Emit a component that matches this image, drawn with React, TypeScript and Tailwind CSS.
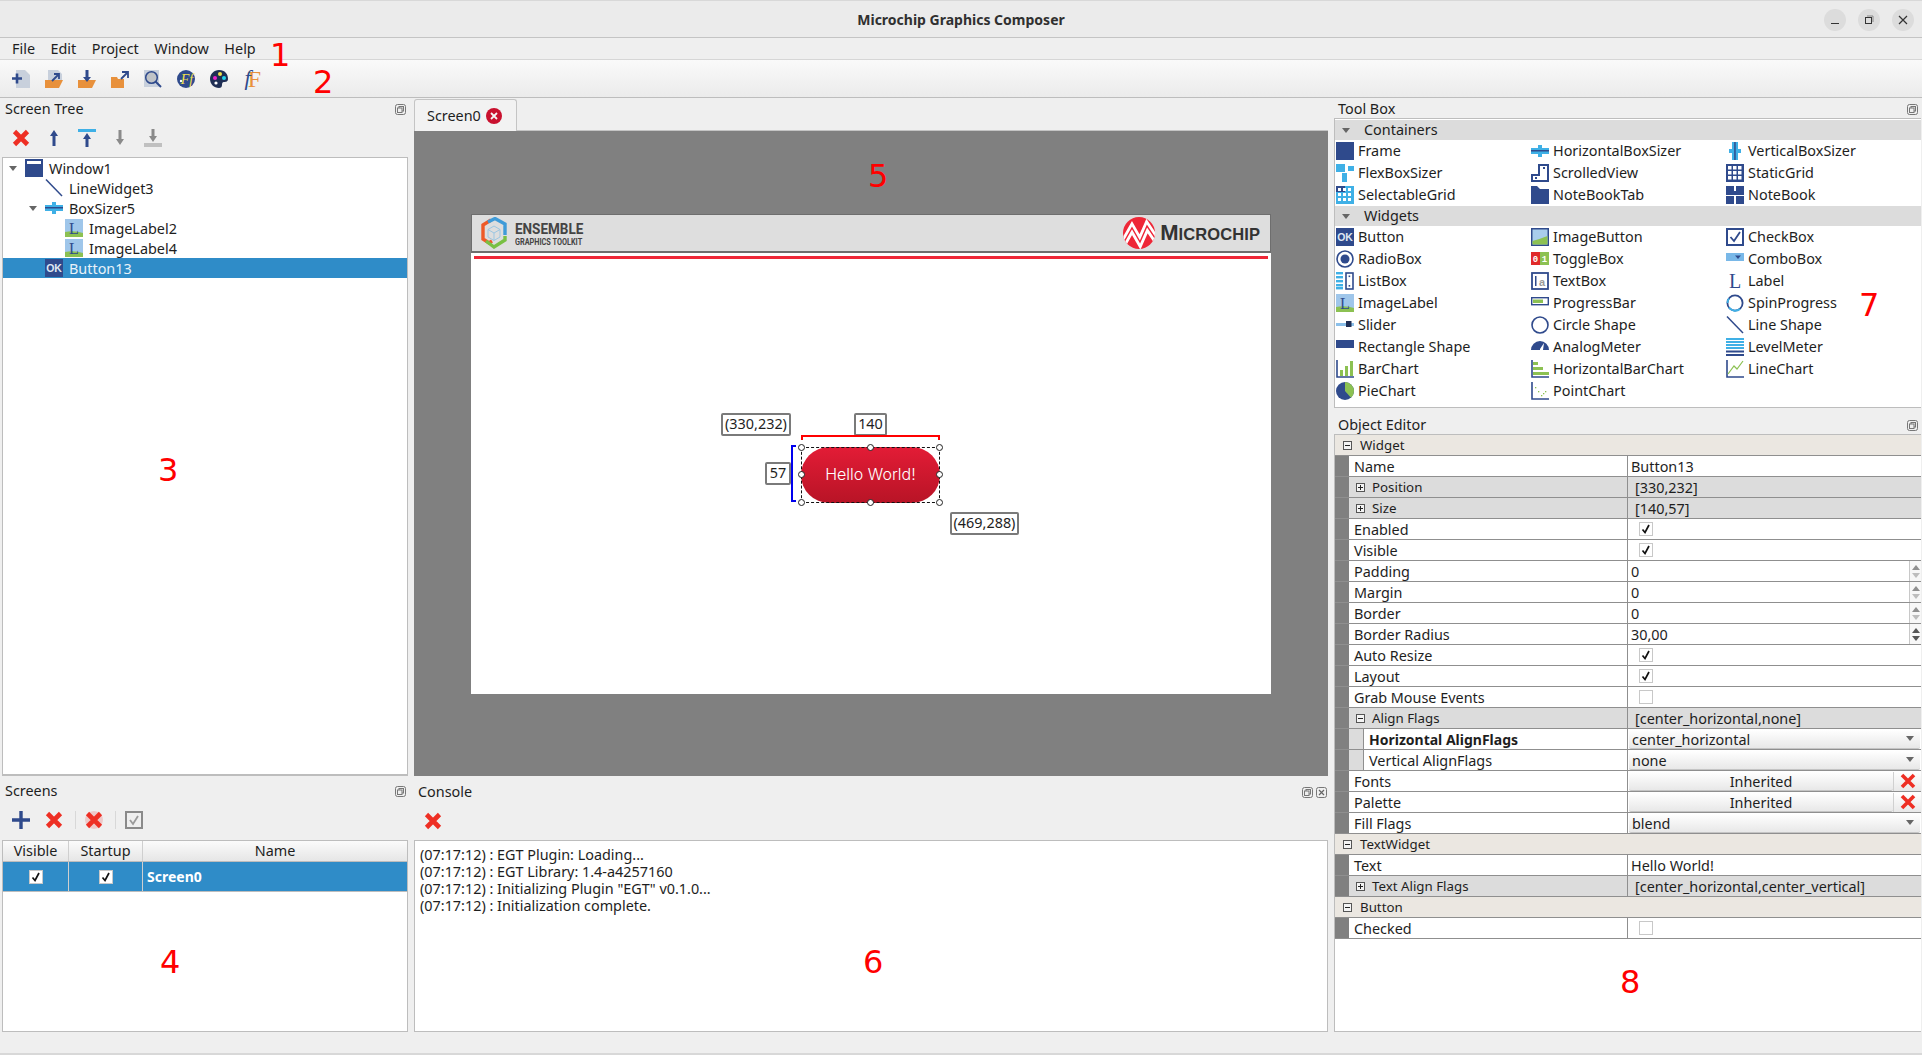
import type { ReactNode } from 'react';

const BLUE = '#2f4a8c';
const SKY = '#3fb0e6';
const RED = '#ee2f24';

const Ico = ({ children }: { children: ReactNode }) => (
  <svg viewBox="0 0 18 18" className="w-[18px] h-[18px] shrink-0 overflow-visible">
    {children}
  </svg>
);

const XIcon = () => (
  <Ico>
    <path d="M2.5 2.5 L15.5 15.5 M15.5 2.5 L2.5 15.5" stroke={RED} strokeWidth="4.6" />
  </Ico>
);

const ArrowUp = ({ color = BLUE }: { color?: string }) => (
  <path d="M9 1 L13 7 H10.5 V17 H7.5 V7 H5 Z" fill={color} />
);

const ArrowDown = ({ color = '#8a8a8a' }: { color?: string }) => (
  <path d="M9 16 L13 10 H10.5 V1 H7.5 V10 H5 Z" fill={color} />
);

const Landscape = () => (
  <>
    <rect width="18" height="18" fill="#9fc6ea" />
    <path d="M0 13 Q9 11 18 14 V18 H0 Z" fill="#8cc152" />
  </>
);

// toolbox + tree icons, drawn by hand on an 18px grid
const icons: Record<string, ReactNode> = {
  frame: <rect width="18" height="18" fill={BLUE} />,
  window: (
    <>
      <rect width="18" height="18" fill={BLUE} />
      <rect x="2" y="2" width="14" height="3" fill="#fff" />
    </>
  ),
  hbox: (
    <>
      <rect x="0" y="6" width="18" height="6" fill={SKY} />
      <rect x="7" y="3" width="4" height="12" fill={SKY} />
      <rect x="0" y="8" width="18" height="1.5" fill={BLUE} />
    </>
  ),
  vbox: (
    <>
      <rect x="6" y="0" width="6" height="18" fill={SKY} />
      <rect x="3" y="7" width="12" height="4" fill={SKY} />
      <rect x="8.2" y="0" width="1.5" height="18" fill={BLUE} />
    </>
  ),
  flex: (
    <>
      <rect x="0" y="0" width="9" height="8" fill={SKY} />
      <rect x="12" y="2" width="6" height="5" fill={SKY} />
      <rect x="6" y="9" width="5" height="9" fill={SKY} />
    </>
  ),
  scrolled: (
    <>
      <path d="M0 18 V10 H7 V0 H18 V18 Z" fill={BLUE} />
      <path d="M9 12 V2 H16 V16 H2 V12 Z" fill="#fff" />
      <rect x="12" y="3" width="2" height="2" fill={BLUE} />
      <rect x="4" y="13" width="2" height="2" fill={BLUE} />
    </>
  ),
  grid: (
    <>
      <rect width="18" height="18" fill={BLUE} />
      {[2, 7, 12].map((x) => [2, 7, 12].map((y) => <rect key={`${x}${y}`} x={x} y={y} width="3.5" height="3.5" fill="#fff" />))}
    </>
  ),
  selgrid: (
    <>
      <rect width="18" height="18" fill={SKY} />
      <rect width="9" height="6" fill={BLUE} />
      {[2, 7, 12].map((x) => [2, 7, 12].map((y) => <rect key={`${x}${y}`} x={x} y={y} width="3" height="3" fill="#fff" />))}
    </>
  ),
  tab: <path d="M0 0 H6 L9 3 H18 V18 H0 Z" fill={BLUE} />,
  notebook: (
    <>
      <rect width="8" height="8" fill={BLUE} />
      <rect x="10" y="0" width="8" height="8" fill={BLUE} />
      <rect y="10" width="8" height="8" fill={BLUE} />
      <rect x="10" y="10" width="8" height="8" fill={BLUE} />
      <rect y="5" width="18" height="4" fill={BLUE} />
    </>
  ),
  ok: (
    <>
      <rect width="18" height="18" fill={BLUE} />
      <text x="9" y="13" textAnchor="middle" fontSize="10.5" fontWeight="700" fill="#dfe8f2" fontFamily="'Liberation Sans', sans-serif">OK</text>
    </>
  ),
  imgbtn: (
    <>
      <rect width="18" height="18" fill={BLUE} />
      <rect x="1.5" y="1.5" width="15" height="15" fill="#a9cdec" />
      <path d="M1.5 13 Q9 11 16.5 8 V16.5 H1.5 Z" fill="#8cc152" />
    </>
  ),
  check: (
    <>
      <rect x="1" y="1" width="16" height="16" fill="#fff" stroke={BLUE} strokeWidth="2" />
      <path d="M4.5 9 L8 13 L14 4" fill="none" stroke={BLUE} strokeWidth="1.8" />
    </>
  ),
  radio: (
    <>
      <circle cx="9" cy="9" r="8" fill="#fff" stroke={BLUE} strokeWidth="1.6" />
      <circle cx="9" cy="9" r="4.5" fill={BLUE} />
    </>
  ),
  toggle: (
    <>
      <rect x="0" y="2" width="9" height="13" fill="#e02a2a" />
      <rect x="9" y="2" width="9" height="13" fill="#8cc152" />
      <text x="4.5" y="12" textAnchor="middle" fontSize="9" fontWeight="700" fill="#fff" fontFamily="'Liberation Mono', monospace">0</text>
      <text x="13.5" y="12" textAnchor="middle" fontSize="9" fontWeight="700" fill="#fff" fontFamily="'Liberation Mono', monospace">1</text>
    </>
  ),
  combo: (
    <>
      <rect x="0" y="3" width="18" height="8" fill="#79b8e8" />
      <path d="M9 5.5 H15 L12 9 Z" fill={BLUE} />
    </>
  ),
  list: (
    <>
      {[0, 4, 8, 12, 15].map((y) => (
        <rect key={y} x="0" y={y} width="7" height="2.4" fill={SKY} />
      ))}
      <rect x="10" y="1" width="7" height="16" fill="#fff" stroke={BLUE} strokeWidth="1.6" />
      <rect x="12.6" y="3.5" width="1.6" height="1.6" fill={BLUE} />
      <rect x="12.6" y="13" width="1.6" height="1.6" fill={BLUE} />
    </>
  ),
  textbox: (
    <>
      <rect x="1" y="1" width="16" height="16" fill="#fff" stroke={BLUE} strokeWidth="1.8" />
      <rect x="4" y="4" width="1.5" height="10" fill={BLUE} />
      <text x="11" y="14" textAnchor="middle" fontSize="11" fontWeight="700" fill="#9a9a9a" fontFamily="'Liberation Sans', sans-serif">a</text>
    </>
  ),
  label: <text x="9" y="16" textAnchor="middle" fontSize="20" fill={BLUE} fontFamily="'Liberation Serif', serif">L</text>,
  imglabel: (
    <>
      <Landscape />
      <text x="9" y="15" textAnchor="middle" fontSize="16" fill={BLUE} fontFamily="'Liberation Serif', serif">L</text>
    </>
  ),
  progress: (
    <>
      <rect x="0.7" y="3.7" width="16.6" height="7" fill="#fff" stroke={BLUE} strokeWidth="1.4" />
      <rect x="2" y="5.5" width="10" height="3.5" fill="#8cc152" />
    </>
  ),
  spin: (
    <>
      <circle cx="9" cy="9" r="7.6" fill="none" stroke={BLUE} strokeWidth="1.8" />
      <path d="M3 13.5 A7.6 7.6 0 0 0 14 15" fill="none" stroke={SKY} strokeWidth="2" />
      <path d="M1.5 9 A7.6 7.6 0 0 1 3 4.5" fill="none" stroke={SKY} strokeWidth="2" />
    </>
  ),
  slider: (
    <>
      <rect x="0" y="7" width="18" height="3" fill="#8bc0ea" />
      <rect x="10" y="5" width="5.5" height="6" fill="#1f2f55" />
    </>
  ),
  circle: <circle cx="9" cy="9" r="8" fill="#fff" stroke={BLUE} strokeWidth="1.6" />,
  line: <path d="M1 0.5 L17 17" stroke={BLUE} strokeWidth="1.5" />,
  rect: <rect x="0" y="2" width="18" height="8" fill={BLUE} />,
  meter: <path d="M0 12 A9 9 0 0 1 18 12 H12 L13 5 L9 11 L9 12 Z" fill={BLUE} />,
  level: (
    <>
      {[0, 3, 6, 9].map((y) => (
        <rect key={y} x="0" y={y} width="18" height="2" fill={SKY} />
      ))}
      <rect x="0" y="12.5" width="18" height="2" fill={BLUE} />
      <rect x="0" y="16" width="18" height="2" fill={BLUE} />
    </>
  ),
  bar: (
    <>
      <path d="M1 0 V17 H18" fill="none" stroke={BLUE} strokeWidth="1.6" />
      <rect x="4" y="10" width="3" height="6" fill="#8cc152" />
      <rect x="9" y="6" width="3" height="10" fill="#8cc152" />
      <rect x="14" y="1" width="3" height="15" fill="#8cc152" />
    </>
  ),
  hbar: (
    <>
      <path d="M1 0 V17 H18" fill="none" stroke={BLUE} strokeWidth="1.6" />
      <rect x="2" y="2" width="5" height="3" fill="#8cc152" />
      <rect x="2" y="7" width="10" height="3" fill="#8cc152" />
      <rect x="2" y="12" width="16" height="3" fill="#8cc152" />
    </>
  ),
  linechart: (
    <>
      <path d="M1 0 V17 H18" fill="none" stroke={BLUE} strokeWidth="1.6" />
      <path d="M2 14 L8 6 L11 9 L17 1" fill="none" stroke="#8cc152" strokeWidth="1.2" />
    </>
  ),
  pie: (
    <>
      <circle cx="9" cy="9" r="9" fill={BLUE} />
      <path d="M9 9 V0 A9 9 0 0 0 0 9 A9 9 0 0 0 3 15.7 Z" fill="#8cc152" transform="scale(-1 1) translate(-18 0)" />
    </>
  ),
  point: (
    <>
      <path d="M1 0 V17 H18" fill="none" stroke={BLUE} strokeWidth="1.6" />
      <rect x="4" y="5" width="1.3" height="1.3" fill="#8cc152" />
      <rect x="7" y="9" width="1.3" height="1.3" fill="#8cc152" />
      <rect x="12" y="11" width="1.3" height="1.3" fill="#8cc152" />
      <rect x="14" y="9" width="1.3" height="1.3" fill="#8cc152" />
      <rect x="10" y="13" width="1.3" height="1.3" fill="#8cc152" />
    </>
  ),
};

const containers = [
  ['frame', 'Frame'], ['hbox', 'HorizontalBoxSizer'], ['vbox', 'VerticalBoxSizer'],
  ['flex', 'FlexBoxSizer'], ['scrolled', 'ScrolledView'], ['grid', 'StaticGrid'],
  ['selgrid', 'SelectableGrid'], ['tab', 'NoteBookTab'], ['notebook', 'NoteBook'],
];

const widgets = [
  ['ok', 'Button'], ['imgbtn', 'ImageButton'], ['check', 'CheckBox'],
  ['radio', 'RadioBox'], ['toggle', 'ToggleBox'], ['combo', 'ComboBox'],
  ['list', 'ListBox'], ['textbox', 'TextBox'], ['label', 'Label'],
  ['imglabel', 'ImageLabel'], ['progress', 'ProgressBar'], ['spin', 'SpinProgress'],
  ['slider', 'Slider'], ['circle', 'Circle Shape'], ['line', 'Line Shape'],
  ['rect', 'Rectangle Shape'], ['meter', 'AnalogMeter'], ['level', 'LevelMeter'],
  ['bar', 'BarChart'], ['hbar', 'HorizontalBarChart'], ['linechart', 'LineChart'],
  ['pie', 'PieChart'], ['point', 'PointChart'],
];

const treeRows = [
  { icon: 'window', label: 'Window1', depth: 0, arrow: true },
  { icon: 'line', label: 'LineWidget3', depth: 1 },
  { icon: 'hbox', label: 'BoxSizer5', depth: 1, arrow: true },
  { icon: 'imglabel', label: 'ImageLabel2', depth: 2 },
  { icon: 'imglabel', label: 'ImageLabel4', depth: 2 },
  { icon: 'ok', label: 'Button13', depth: 1, selected: true },
];

const consoleLines = [
  '(07:17:12) : EGT Plugin: Loading...',
  '(07:17:12) : EGT Library: 1.4-a4257160',
  '(07:17:12) : Initializing Plugin "EGT" v0.1.0...',
  '(07:17:12) : Initialization complete.',
];

const Caret = ({ className = '' }: { className?: string }) => (
  <svg viewBox="0 0 8 5" className={`w-[8px] h-[5px] shrink-0 ${className}`}>
    <path d="M0 0 H8 L4 5 Z" fill="#666" />
  </svg>
);

const FloatIcon = () => (
  <svg viewBox="0 0 11 11" className="w-[11px] h-[11px] shrink-0">
    <rect x="0.5" y="0.5" width="10" height="10" rx="2" fill="none" stroke="#777" />
    <rect x="4" y="2.5" width="4.5" height="4.5" fill="none" stroke="#777" />
    <rect x="2.5" y="4" width="4.5" height="4.5" fill="#efefef" stroke="#777" />
  </svg>
);

const CloseIcon = () => (
  <svg viewBox="0 0 11 11" className="w-[11px] h-[11px] shrink-0">
    <rect x="0.5" y="0.5" width="10" height="10" rx="2" fill="none" stroke="#777" />
    <path d="M3 3 L8 8 M8 3 L3 8" stroke="#666" strokeWidth="1.2" />
  </svg>
);

const PanelTitle = ({ title, className = '', children }: { title: string; className?: string; children?: ReactNode }) => (
  <div className={`flex items-center justify-between shrink-0 ${className}`}>
    <span>{title}</span>
    <div className="flex gap-[3px]">{children ?? <FloatIcon />}</div>
  </div>
);

const CheckBox = ({ checked, className = '' }: { checked?: boolean; className?: string }) => (
  <span className={`flex w-[14px] h-[14px] items-center justify-center border border-[#c8c8c8] bg-white ${className}`}>
    {checked && (
      <svg viewBox="0 0 10 10" className="w-[10px] h-[10px]">
        <path d="M1.5 5.5 L4 8.5 L8 1" fill="none" stroke="#111" strokeWidth="1.7" />
      </svg>
    )}
  </span>
);

const Expander = ({ open }: { open?: boolean }) => (
  <svg viewBox="0 0 9 9" className="w-[9px] h-[9px] shrink-0">
    <rect x="0.5" y="0.5" width="8" height="8" fill="#f4f4f4" stroke="#555" />
    <path d={open ? 'M2 4.5 H7' : 'M2 4.5 H7 M4.5 2 V7'} stroke="#222" />
  </svg>
);

const Spinner = ({ dark }: { dark?: boolean }) => (
  <div className="flex flex-col items-center justify-center gap-[3px] w-[12px] h-full border-l border-[#c8c8c8] bg-[#f7f7f7]">
    <svg viewBox="0 0 8 5" className="w-[8px] h-[5px]"><path d="M0 5 H8 L4 0 Z" fill={dark ? '#555' : '#8f8f8f'} /></svg>
    <svg viewBox="0 0 8 5" className="w-[8px] h-[5px]"><path d="M0 0 H8 L4 5 Z" fill={dark ? '#555' : '#bdbdbd'} /></svg>
  </div>
);

// property row shells
const Section = ({ label }: { label: string }) => (
  <div className="flex items-center h-[21px] pl-[8px] gap-[8px] bg-[#ebe7e1] border-b border-[#8f8f8f] text-[13.3px]">
    <Expander open />
    <span className="pt-[2px]">{label}</span>
  </div>
);

const Row = ({ label, children, bold, sub }: { label: string; children?: ReactNode; bold?: boolean; sub?: boolean }) => (
  <div className="flex h-[21px] border-b border-[#8f8f8f]">
    <div className="w-[14px] bg-[#808080] shrink-0" />
    {sub && <div className="w-[14px] bg-[#dcdcdc] shrink-0" />}
    <div className={`flex items-center pt-[2px] ${sub ? 'w-[265px] pl-[5px] border-l border-[#8f8f8f]' : 'w-[279px] pl-[5px]'} shrink-0 border-r border-[#8f8f8f] ${bold ? 'font-bold text-[14px]' : ''}`}>
      {label}
    </div>
    <div className="flex flex-1 min-w-0 items-center">{children}</div>
  </div>
);

const Value = ({ children }: { children: ReactNode }) => <span className="pl-[3px] pt-[2px]">{children}</span>;

const Group = ({ label, value, open }: { label: string; value: string; open?: boolean }) => (
  <div className="flex h-[21px] bg-[#dcdcdc] border-b border-[#8f8f8f]">
    <div className="w-[14px] bg-[#808080] shrink-0" />
    <div className="flex items-center w-[279px] pl-[7px] gap-[7px] shrink-0 border-r border-[#8f8f8f] text-[13.3px]">
      <Expander open={open} />
      <span className="pt-[2px]">{label}</span>
    </div>
    <span className="flex items-center pl-[7px] pt-[2px]">{value}</span>
  </div>
);

const ToolGrid = ({ items }: { items: string[][] }) => (
  <div className="grid grid-cols-[195px_195px_195px] pl-[1px]">
    {items.map(([icon, label]) => (
      <div key={label} className="flex items-center h-[22px] gap-[4px]">
        <Ico>{icons[icon]}</Ico>
        <span>{label}</span>
      </div>
    ))}
  </div>
);

const ToolHeader = ({ label }: { label: string }) => (
  <div className="flex items-center h-[20px] pl-[7px] gap-[14px] bg-[#dcdcdc]">
    <Caret />
    <span>{label}</span>
  </div>
);

const Annot = ({ n, className }: { n: string; className: string }) => (
  <span className={`absolute text-[32px] leading-none text-[#ff0000] font-['DejaVu_Sans',sans-serif] ${className}`}>{n}</span>
);

const Tag = ({ children, className }: { children: ReactNode; className: string }) => (
  <div className={`absolute flex items-center justify-center h-[23px] border-2 border-[#7a7a7a] rounded-[2px] bg-white text-[14.4px] ${className}`}>
    {children}
  </div>
);

const Handle = ({ className }: { className: string }) => (
  <span className={`absolute w-[7px] h-[7px] rounded-full border-[1.5px] border-[#222] bg-white ${className}`} />
);

export default function App() {
  return (
    <div className="relative flex flex-col w-[1922px] h-[1055px] overflow-hidden bg-[#efefef] text-[14.4px] leading-none text-[#1e1e1e] font-['Noto_Sans',sans-serif]">
      {/* Title bar */}
      <header className="relative flex items-center justify-center h-[38px] shrink-0 bg-[#ebebeb] border-t border-[#d8d8d8] border-b border-b-[#c4c4c4]">
        <span className="pt-[2px] font-bold text-[14px] text-[#303030]">Microchip Graphics Composer</span>
        <div className="absolute right-[8px] top-[8px] flex gap-[12px]">
          {['min', 'max', 'close'].map((b) => (
            <span key={b} className="flex items-center justify-center w-[22px] h-[22px] rounded-full bg-[#dcdcdc]">
              <svg viewBox="0 0 12 12" className="w-[12px] h-[12px]">
                {b === 'min' && <path d="M2 9.5 H10" stroke="#333" strokeWidth="1" />}
                {b === 'max' && (
                  <>
                    <path d="M4 2 H10 V8" fill="none" stroke="#888" />
                    <rect x="2.5" y="3.5" width="6" height="6" fill="none" stroke="#333" />
                  </>
                )}
                {b === 'close' && <path d="M2 2 L10 10 M10 2 L2 10" stroke="#333" strokeWidth="1.2" />}
              </svg>
            </span>
          ))}
        </div>
      </header>

      {/* Menu bar */}
      <nav className="flex items-center h-[22px] shrink-0 pl-[12px] pt-[2px] gap-[15.5px] bg-[#efefef] border-b border-[#d6d6d6]">
        {['File', 'Edit', 'Project', 'Window', 'Help'].map((m) => (
          <span key={m}>{m}</span>
        ))}
      </nav>

      {/* Main toolbar */}
      <div className="flex items-center h-[38px] shrink-0 pl-[12px] gap-[15px] bg-gradient-to-b from-[#fafafa] to-[#ebebeb] border-b border-[#bdbdbd]">
        <Ico>
          <path d="M4 0 H13 L18 5 V18 H4 Z" fill="#c8d0dc" />
          <path d="M0 8.5 H10 M5 3.5 V13.5" stroke={BLUE} strokeWidth="2.6" />
        </Ico>
        <Ico>
          <path d="M3 0 H13 L17 4 V12 H3 Z" fill="#c8d0dc" />
          <path d="M0 10 H18 L14 18 H0 Z" fill="#e8913c" />
          <path d="M7 11 L13 5 M9 4 H14 V9" fill="none" stroke={BLUE} strokeWidth="1.8" />
        </Ico>
        <Ico>
          <path d="M0 10 H18 L14 18 H0 Z" fill="#e8913c" />
          <path d="M9 12 L13 7 H10.5 V0 H7.5 V7 H5 Z" fill={BLUE} />
        </Ico>
        <Ico>
          <path d="M0 7 H6 L7 9 H13 V18 H0 Z" fill="#e8913c" />
          <path d="M10 9 L16 3 M11 2 H17 V8" fill="none" stroke={BLUE} strokeWidth="1.8" />
        </Ico>
        <Ico>
          <rect width="15" height="17" fill="#c8d0dc" />
          <circle cx="7.5" cy="7.5" r="5.8" fill="#bfc3c7" stroke={BLUE} strokeWidth="1.5" />
          <path d="M11.5 11.5 L17 17" stroke={BLUE} strokeWidth="2" />
        </Ico>
        <Ico>
          <circle cx="9" cy="9" r="9" fill={BLUE} />
          <text x="10" y="14" textAnchor="middle" fontSize="14" fontStyle="italic" fill="#f2e14c" fontFamily="'Liberation Serif', serif">Ff</text>
          <circle cx="4" cy="11" r="1.2" fill="#fff" />
        </Ico>
        <Ico>
          <path d="M9 0 C15 0 18 4 18 9 C18 12 15 12 14 12 C12 12 12 14 12 15 C12 17 11 18 9 18 C4 18 0 14 0 9 C0 4 4 0 9 0 Z" fill="#1f2f55" />
          <circle cx="5" cy="8" r="2" fill="#ee22cc" />
          <circle cx="10" cy="4" r="2" fill="#f2e14c" />
          <circle cx="14" cy="8" r="2" fill="#22d4ee" />
          <circle cx="6" cy="13" r="1.6" fill="#fff" />
        </Ico>
        <Ico>
          <text x="11.5" y="16.5" textAnchor="middle" fontSize="24" fill="#e8913c" fontFamily="'Liberation Serif', serif">F</text>
          <text x="4.5" y="15" textAnchor="middle" fontSize="22" fontStyle="italic" fill={BLUE} fontFamily="'Liberation Serif', serif">f</text>
        </Ico>
      </div>

      {/* Docks */}
      <div className="flex flex-1 min-h-0">
        {/* Left column */}
        <div className="flex flex-col w-[406px] ml-[2px] shrink-0">
          <PanelTitle title="Screen Tree" className="h-[22px] pl-[3px] pr-[2px]" />
          <div className="flex items-center h-[37px] pb-[2px] shrink-0 pl-[10px] gap-[15px]">
            <XIcon />
            <Ico><ArrowUp /></Ico>
            <Ico>
              <rect width="18" height="3" fill={SKY} />
              <path d="M9 4 L13 10 H10.5 V18 H7.5 V10 H5 Z" fill={BLUE} />
            </Ico>
            <Ico><ArrowDown /></Ico>
            <Ico>
              <path d="M9 13 L13 7 H10.5 V0 H7.5 V7 H5 Z" fill="#8a8a8a" />
              <rect y="14" width="18" height="4" fill="#c0c0c0" />
            </Ico>
          </div>
          <div className="h-[619px] shrink-0 bg-white border border-[#bdbdbd] border-b-2">
            {treeRows.map((r) => (
              <div
                key={r.label}
                className={`flex items-center h-[20px] gap-[6px] ${r.selected ? 'bg-[#2f8cc8] text-[#e8f2f9]' : ''} ${r.depth === 0 ? 'pl-[22px]' : r.depth === 1 ? 'pl-[42px]' : 'pl-[62px]'} relative`}
              >
                {r.arrow && <Caret className={`absolute ${r.depth === 0 ? 'left-[6px]' : 'left-[26px]'}`} />}
                <Ico>{icons[r.icon]}</Ico>
                <span className="pt-[2px]">{r.label}</span>
              </div>
            ))}
          </div>

          <PanelTitle title="Screens" className="h-[29px] pt-[2px] pl-[3px] pr-[2px]" />
          <div className="flex items-center h-[35px] pb-[5px] shrink-0 pl-[10px]">
            <Ico><path d="M0 9 H18 M9 0 V18" stroke={BLUE} strokeWidth="3.4" /></Ico>
            <span className="ml-[15px]"><XIcon /></span>
            <span className="w-px h-[18px] ml-[12px] bg-[#d8d8d8]" />
            <span className="ml-[9px]">
              <Ico>
                <circle cx="9" cy="9" r="9" fill="#eec9c9" />
                <path d="M2.5 2.5 L15.5 15.5 M15.5 2.5 L2.5 15.5" stroke={RED} strokeWidth="4.6" />
              </Ico>
            </span>
            <span className="w-px h-[18px] ml-[12px] bg-[#d8d8d8]" />
            <span className="ml-[9px]">
              <Ico>
                <rect x="1" y="1" width="16" height="16" fill="none" stroke="#8a8a8a" strokeWidth="2" />
                <path d="M5 9 L8 13 L13 5" fill="none" stroke="#9a9a9a" strokeWidth="1.8" />
              </Ico>
            </span>
          </div>
          <div className="flex flex-col flex-1 min-h-0 bg-white border border-[#bdbdbd]">
            <div className="flex h-[21px] shrink-0 bg-gradient-to-b from-[#fbfbfb] to-[#e6e6e6] border-b border-[#bdbdbd]">
              <div className="flex items-center justify-center w-[66px] border-r border-[#cfcfcf]">Visible</div>
              <div className="flex items-center justify-center w-[74px] border-r border-[#cfcfcf]">Startup</div>
              <div className="flex flex-1 items-center justify-center">Name</div>
            </div>
            <div className="flex h-[30px] shrink-0 bg-[#2f8cc8] text-white border-b border-[#bdbdbd]">
              <div className="flex items-center justify-center w-[66px] border-r border-[#cfcfcf]"><CheckBox checked /></div>
              <div className="flex items-center justify-center w-[74px] border-r border-[#cfcfcf]"><CheckBox checked /></div>
              <div className="flex flex-1 items-center pl-[4px] font-bold text-[14px]">Screen0</div>
            </div>
          </div>
        </div>

        {/* Center column */}
        <div className="flex flex-col w-[914px] ml-[6px] shrink-0">
          <div className="flex h-[33px] shrink-0 items-end border-b border-[#c4c4c4]">
            <div className="flex items-center h-[32px] w-[103px] -mb-px pl-[12px] gap-[5px] bg-[#f2f2f2] border border-[#c4c4c4] border-b-0 rounded-t-[3px]">
              <span className="pt-[2px]">Screen0</span>
              <span className="flex items-center justify-center w-[16px] h-[16px] rounded-full bg-[#c9102e]">
                <svg viewBox="0 0 8 8" className="w-[8px] h-[8px]"><path d="M1 1 L7 7 M7 1 L1 7" stroke="#f5f5f5" strokeWidth="1.8" /></svg>
              </span>
            </div>
          </div>

          {/* Canvas */}
          <div className="relative h-[645px] shrink-0 flex justify-center pt-[83px] bg-[#808080]">
            <div className="relative flex flex-col w-[800px] h-[480px] bg-white">
              <div className="flex items-center justify-between h-[39px] shrink-0 pl-[9px] pr-[10px] bg-[#dedede] border border-[#6e6e6e] border-b-2">
                <div className="flex items-center gap-[8px]">
                  <svg viewBox="0 0 26 32" className="w-[26px] h-[32px] shrink-0">
                    <path d="M10 3 L2 8 V22 L8 26 L11 24" fill="none" stroke="#ee5a28" strokeWidth="3.4" />
                    <path d="M7 5 L14 1.5 L24 7 V18" fill="none" stroke="#3f9bd8" strokeWidth="3.4" />
                    <path d="M5 24 L13 30 L24 23 V19" fill="none" stroke="#79c043" strokeWidth="3.4" />
                    <path d="M13 9 L19 12.5 V20 L13 23.5 L7 20 V12.5 Z M13 16 V23.5 M13 16 L7 12.5 M13 16 L19 12.5" fill="none" stroke="#9cc7e2" strokeWidth="1" />
                  </svg>
                  <div className="flex flex-col gap-[2px] w-[70px] pt-[3px] text-[#444] font-['Roboto',sans-serif] font-bold whitespace-nowrap">
                    <span className="inline-block origin-left scale-x-[0.9] text-[15px] leading-[13px]">ENSEMBLE</span>
                    <span className="inline-block origin-left scale-x-[0.86] text-[8.5px] leading-[9px]">GRAPHICS TOOLKIT</span>
                  </div>
                </div>
                <div className="flex items-center gap-[5px]">
                  <svg viewBox="0 0 32 32" className="w-[32px] h-[32px] shrink-0">
                    <circle cx="16" cy="16" r="16" fill="#ee2737" />
                    <clipPath id="chipClip"><circle cx="16" cy="16" r="16" /></clipPath>
                    <g clipPath="url(#chipClip)" fill="none">
                      <path d="M0 27 L9 11 L17 25 L24 9 L34 24" stroke="#fff" strokeWidth="7" />
                      <path d="M0 27 L9 11 L17 25 L24 9 L34 24" stroke="#ee2737" strokeWidth="1.4" />
                    </g>
                  </svg>
                  <span className="font-['Liberation_Sans',sans-serif] font-bold text-[#333] text-[22px] leading-none">
                    M<span className="text-[16.5px] tracking-[0.1px]">ICROCHIP</span>
                  </span>
                </div>
              </div>
              <div className="h-[3px] mx-[3px] mt-[3px] bg-[#ee2737]" />

              {/* Selected button + handles on the free canvas */}
              <Tag className="left-[250px] top-[199px] w-[70px]">(330,232)</Tag>
              <Tag className="left-[383px] top-[199px] w-[33px]">140</Tag>
              <Tag className="left-[294px] top-[248px] w-[26px]">57</Tag>
              <Tag className="left-[479px] top-[298px] w-[69px]">(469,288)</Tag>
              <div className="absolute left-[330px] top-[221px] w-[139px] h-[5px] border-2 border-b-0 border-[#ff0000]" />
              <div className="absolute left-[320px] top-[231px] w-[5px] h-[57px] border-2 border-r-0 border-[#0000ee]" />
              <div className="absolute left-[330px] top-[233px] flex items-center justify-center pb-[3px] w-[139px] h-[56px] rounded-[30px] bg-gradient-to-b from-[#e31c36] to-[#b81426] text-white text-[16px] font-['Inter',sans-serif] font-light">
                Hello World!
              </div>
              <div className="absolute left-[330px] top-[233px] w-[139px] h-[56px] border border-dashed border-[#111]" />
              <Handle className="left-[327px] top-[230px]" />
              <Handle className="left-[396px] top-[230px]" />
              <Handle className="left-[465px] top-[230px]" />
              <Handle className="left-[327px] top-[257px]" />
              <Handle className="left-[465px] top-[257px]" />
              <Handle className="left-[327px] top-[285px]" />
              <Handle className="left-[396px] top-[285px]" />
              <Handle className="left-[465px] top-[285px]" />
            </div>
          </div>

          <PanelTitle title="Console" className="h-[32px] pl-[4px] pr-[1px]">
            <FloatIcon />
            <CloseIcon />
          </PanelTitle>
          <div className="flex items-center h-[32px] pb-[6px] shrink-0 pl-[10px]"><XIcon /></div>
          <div className="flex-1 min-h-0 pt-[5px] pl-[5px] bg-white border border-[#bdbdbd] text-[14.4px] leading-[17px]">
            {consoleLines.map((l) => (
              <div key={l}>{l}</div>
            ))}
          </div>
        </div>

        {/* Right column */}
        <div className="flex flex-col flex-1 min-w-0 ml-[6px] mr-px">
          <PanelTitle title="Tool Box" className="h-[20px] pt-[2px] pl-[4px] pr-[3px]" />
          <div className="h-[290px] shrink-0 pt-px bg-white border border-r-0 border-[#bdbdbd]">
            <ToolHeader label="Containers" />
            <ToolGrid items={containers} />
            <ToolHeader label="Widgets" />
            <ToolGrid items={widgets} />
          </div>

          <PanelTitle title="Object Editor" className="h-[26px] pt-[8px] pl-[4px] pr-[3px]" />
          <div className="flex-1 min-h-0 bg-white border border-r-0 border-[#bdbdbd]">
            <Section label="Widget" />
            <Row label="Name"><Value>Button13</Value></Row>
            <Group label="Position" value="[330,232]" />
            <Group label="Size" value="[140,57]" />
            <Row label="Enabled"><CheckBox checked className="ml-[11px]" /></Row>
            <Row label="Visible"><CheckBox checked className="ml-[11px]" /></Row>
            <Row label="Padding"><Value>0</Value><span className="flex-1" /><Spinner /></Row>
            <Row label="Margin"><Value>0</Value><span className="flex-1" /><Spinner /></Row>
            <Row label="Border"><Value>0</Value><span className="flex-1" /><Spinner /></Row>
            <Row label="Border Radius"><Value>30,00</Value><span className="flex-1" /><Spinner dark /></Row>
            <Row label="Auto Resize"><CheckBox checked className="ml-[11px]" /></Row>
            <Row label="Layout"><CheckBox checked className="ml-[11px]" /></Row>
            <Row label="Grab Mouse Events"><CheckBox className="ml-[11px]" /></Row>
            <Group label="Align Flags" value="[center_horizontal,none]" open />
            <Row label="Horizontal AlignFlags" bold sub><Combo value="center_horizontal" /></Row>
            <Row label="Vertical AlignFlags" sub><Combo value="none" /></Row>
            <Row label="Fonts"><Inherited /></Row>
            <Row label="Palette"><Inherited /></Row>
            <Row label="Fill Flags"><Combo value="blend" /></Row>
            <Section label="TextWidget" />
            <Row label="Text"><Value>Hello World!</Value></Row>
            <Group label="Text Align Flags" value="[center_horizontal,center_vertical]" />
            <Section label="Button" />
            <Row label="Checked"><CheckBox className="ml-[11px]" /></Row>
          </div>
        </div>
      </div>

      {/* Status bar */}
      <footer className="h-[23px] shrink-0 bg-[#efefef] border-b-2 border-[#d8d8d8]" />

      {/* Red numbers lying over the screenshot */}
      <Annot n="1" className="left-[270px] top-[39px]" />
      <Annot n="2" className="left-[313px] top-[66px]" />
      <Annot n="3" className="left-[158px] top-[454px]" />
      <Annot n="4" className="left-[160px] top-[946px]" />
      <Annot n="5" className="left-[868px] top-[160px]" />
      <Annot n="6" className="left-[863px] top-[946px]" />
      <Annot n="7" className="left-[1859px] top-[289px]" />
      <Annot n="8" className="left-[1620px] top-[966px]" />
    </div>
  );
}

function Combo({ value }: { value: string }) {
  return (
    <div className="flex flex-1 items-center justify-between h-[19px] mx-px pl-[3px] pr-[6px] rounded-[2px] border-b border-[#c4c4c4] bg-gradient-to-b from-white to-[#e8e8e8]">
      <span className="pt-[3px]">{value}</span>
      <Caret />
    </div>
  );
}

function Inherited() {
  return (
    <div className="flex flex-1 items-center h-[19px]">
      <div className="flex flex-1 items-center justify-center h-full pt-[3px] ml-px rounded-[2px] border-b border-[#c4c4c4] bg-gradient-to-b from-white to-[#e8e8e8]">Inherited</div>
      <div className="flex items-center justify-center w-[28px] h-full border-l border-[#d0d0d0] bg-gradient-to-b from-white to-[#e8e8e8]">
        <svg viewBox="0 0 16 16" className="w-[16px] h-[16px]"><path d="M2 2 L14 14 M14 2 L2 14" stroke={RED} strokeWidth="3.6" /></svg>
      </div>
    </div>
  );
}
